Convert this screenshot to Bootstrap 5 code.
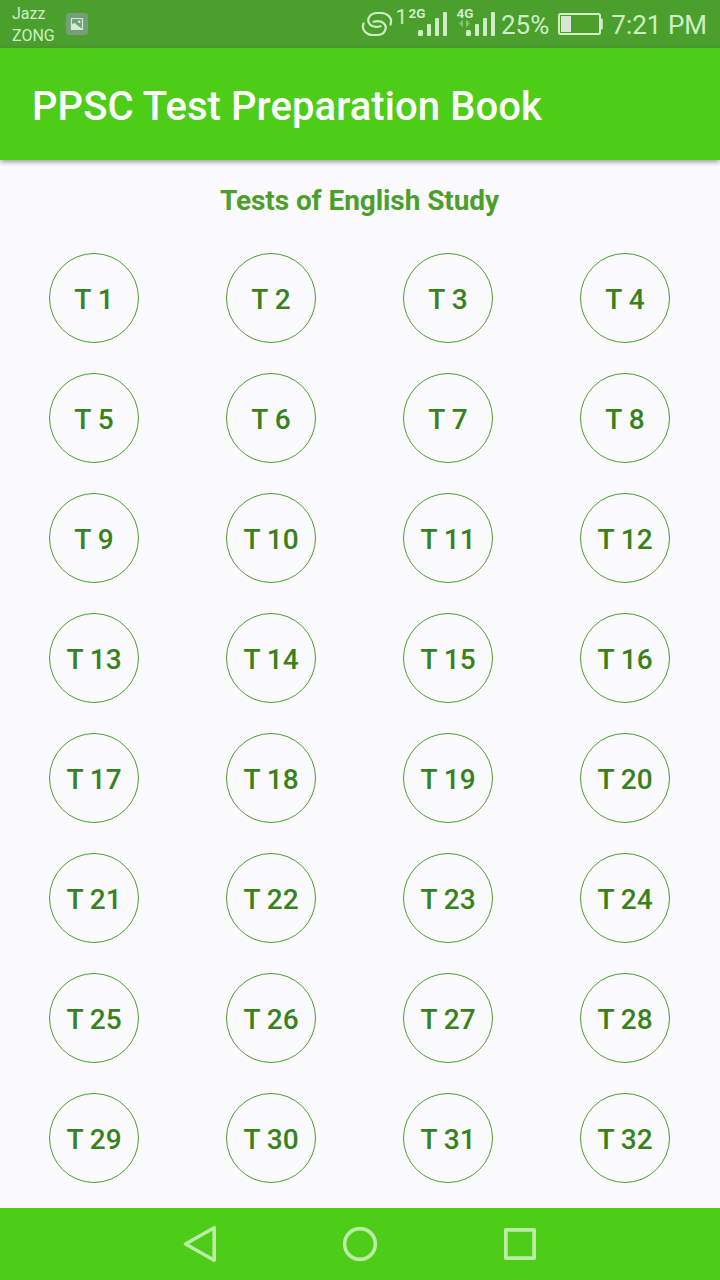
<!DOCTYPE html>
<html lang="en">
<head>
<meta charset="utf-8">
<meta name="viewport" content="width=device-width, initial-scale=1">
<title>PPSC Test Preparation Book</title>
<link href="https://cdn.jsdelivr.net/npm/bootstrap@5.3.0/dist/css/bootstrap.min.css" rel="stylesheet">
<style>
  body { font-family: Roboto, "Liberation Sans", sans-serif; background: #fbfafd; }
  .screen { width: 720px; height: 1280px; }
  .status-bar { height: 48px; background: #4ba02d; color: #d0edc5; padding: 0 13px 0 12px; }
  .carriers { font-size: 16px; line-height: 22px; width: 54px; padding-top: 1px; }
  .status-text { font-size: 26px; line-height: 48px; white-space: nowrap; padding-top: 2px; }
  .battery-level { width: 57px; padding-left: 1px; }
  .clock { width: 104px; }
  .app-bar { height: 112px; background: #4ecd18; color: #fff; padding: 6px 32px 0; box-shadow: 0 2px 5px rgba(0,0,0,.38); z-index: 1; }
  .app-title { font-size: 40px; font-weight: 500; line-height: 48px; letter-spacing: .08px; }
  .page-title { font-size: 28px; font-weight: 700; line-height: 33px; letter-spacing: -.07px; color: #4ba02d; padding-top: 24px; margin-bottom: 36px; }
  .content-area { padding-right: 1px; }
  .test-grid { width: 708px; row-gap: 30px; }
  .test-btn { width: 90px; height: 90px; border: 1px solid #4ba02d; color: #37821c; font-size: 28px; font-weight: 500; line-height: 33px; padding: 2px 0 0; }
  .nav-keys { height: 72px; background: #4ecd18; }
  .nav-keys button { width: 160px; height: 72px; }
</style>
</head>
<body>
<div class="screen d-flex flex-column overflow-hidden">
  <header class="status-bar d-flex align-items-center flex-shrink-0">
    <div class="carriers"><div>Jazz</div><div>ZONG</div></div>
    <svg width="22" height="22" viewBox="0 0 22 22" aria-hidden="true">
      <rect width="22" height="22" rx="3" fill="#73a078"/>
      <path d="M5.500 5.500h11v11h-11z" fill="none" stroke="#d6e9d5" stroke-width="1.200"/>
      <path d="M6 11.500c2-2 3.500-1.500 5 .5l2 1.500 3 2v1H6z" fill="#d6e9d5"/>
      <circle cx="13.200" cy="8.800" r="1.300" fill="#d6e9d5"/>
    </svg>
    <svg class="ms-auto" width="140" height="48" viewBox="360 0 140 48" fill="#d0edc5" font-family="Roboto, sans-serif" aria-label="Signal">
      <g fill="none" stroke="#d0edc5" stroke-width="2.200" stroke-linecap="round">
        <path d="M390.500 24.500C393 18 387 13 381.500 13H377C369.500 13 366 20 370 24.500C372.500 27.300 377 27.200 380.500 26.300"/>
        <path d="M363.500 23.500C361 30 367 35 372.500 35H377C384.500 35 388 28 384 23.500C381.500 20.700 377 20.800 373.500 21.700"/>
      </g>
      <text x="395.500" y="24" font-size="21">1</text>
      <text x="408.500" y="18" font-size="13.500" font-weight="700">2G</text>
      <rect x="418" y="30" width="5" height="6" rx="1.500"/><rect x="427" y="24" width="4" height="12" rx="1"/><rect x="435" y="18" width="4" height="18" rx="1"/><rect x="443" y="12" width="4" height="24" rx="1"/>
      <text x="456.500" y="18" font-size="13.500" font-weight="700">4G</text>
      <path d="M463 19.500v8l-4-4zM466 19.500v8l4-4z" fill="#83c66b"/>
      <rect x="466" y="30" width="5" height="6" rx="1.500"/><rect x="475" y="24" width="4" height="12" rx="1"/><rect x="483" y="18" width="4" height="18" rx="1"/><rect x="491" y="12" width="4" height="24" rx="1"/>
    </svg>
    <span class="status-text battery-level">25%</span>
    <svg class="battery" width="46" height="24" viewBox="0 0 46 24" aria-hidden="true">
      <rect x="2" y="2" width="41" height="20" rx="1.500" fill="none" stroke="#d0edc5" stroke-width="2"/>
      <rect x="4" y="4" width="10" height="16" fill="#d8e6d2"/>
      <path d="M44 7h1.200v10H44z" fill="#d0edc5" stroke="#d0edc5"/>
    </svg>
    <span class="status-text clock text-end">7:21 PM</span>
  </header>

  <nav class="app-bar d-flex align-items-center flex-shrink-0 position-relative">
    <h1 class="app-title m-0">PPSC Test Preparation Book</h1>
  </nav>

  <main class="content-area flex-grow-1 overflow-hidden">
    <h2 class="page-title text-center mt-0">Tests of English Study</h2>
    <div class="test-grid row row-cols-4 gx-0 mx-auto" id="tests"></div>
  </main>

  <footer class="nav-keys d-flex justify-content-center flex-shrink-0">
    <button class="btn p-0 border-0" aria-label="Back"><svg width="40" height="40" viewBox="0 0 40 40" fill="none" stroke="#bceba6" stroke-width="3.600" stroke-linejoin="round"><path d="M34.200 3.700v32.500L5.500 20z"/></svg></button>
    <button class="btn p-0 border-0" aria-label="Home"><svg width="40" height="40" viewBox="0 0 40 40" fill="none" stroke="#bceba6" stroke-width="3.600"><circle cx="20" cy="20" r="15.400"/></svg></button>
    <button class="btn p-0 border-0" aria-label="Recent apps"><svg width="40" height="40" viewBox="0 0 40 40" fill="none" stroke="#bceba6" stroke-width="3.800" stroke-linejoin="round"><rect x="5.900" y="5.900" width="28.200" height="28.200"/></svg></button>
  </footer>
</div>
<script>
  const tests = document.getElementById('tests');
  for (let n = 1; n <= 32; n++) {
    tests.insertAdjacentHTML('beforeend',
      `<div class="col d-flex justify-content-center"><button class="test-btn btn rounded-circle">T ${n}</button></div>`);
  }
</script>
<script src="https://cdn.jsdelivr.net/npm/bootstrap@5.3.0/dist/js/bootstrap.bundle.min.js"></script>
</body>
</html>
